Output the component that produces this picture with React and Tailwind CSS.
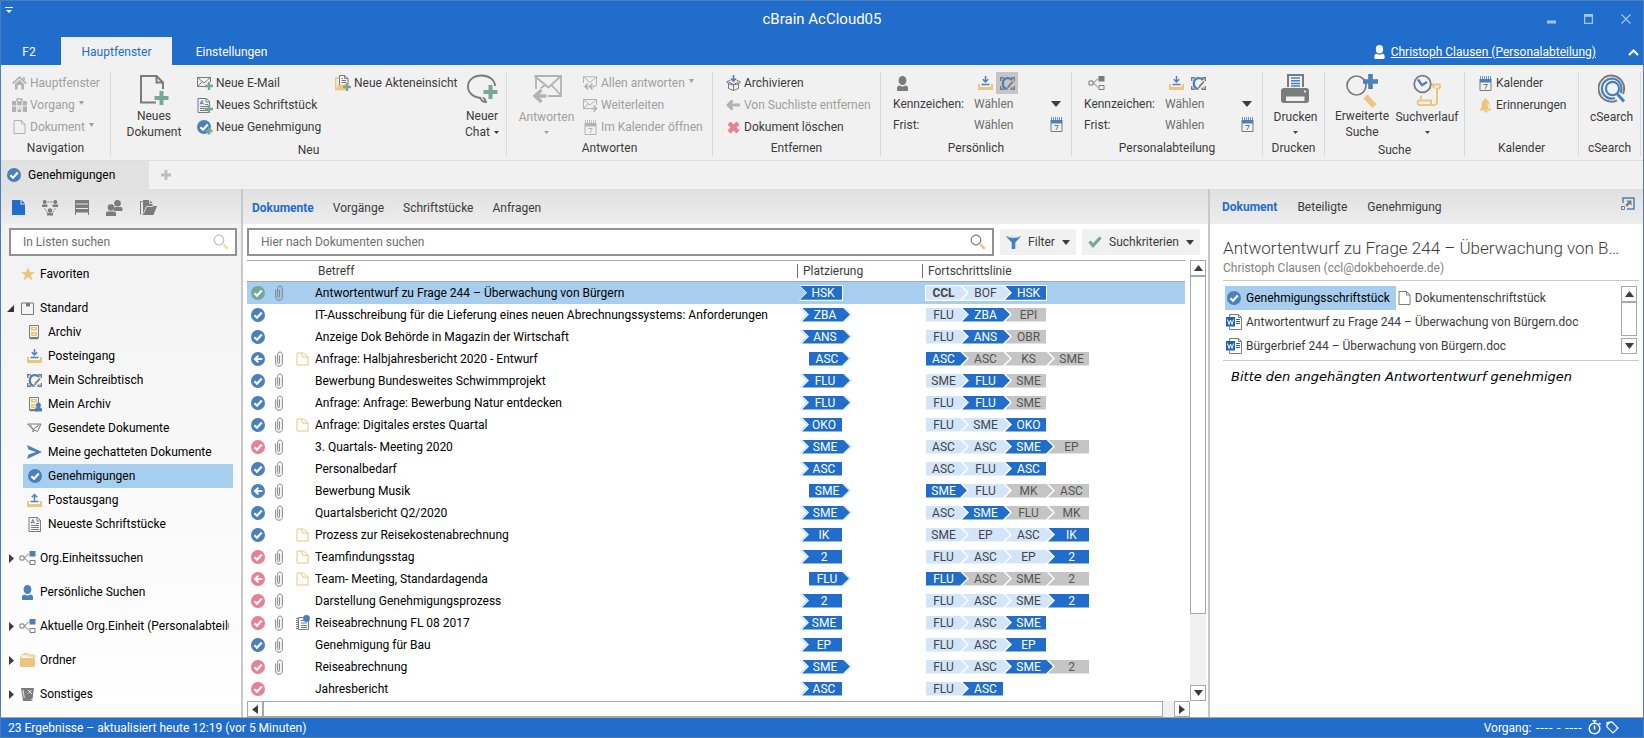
import React from "react";

/* ---------- icons ---------- */
const G = "#7b7b7b";
const B = "#4a80bb";
const Y = "#edc57c";
const GR = "#76a897";
const DIS = "#b2b2b2";

const Svg = ({ w = 16, h = 16, vb, className = "", children }) => (
  <svg width={w} height={h} viewBox={vb || `0 0 ${w} ${h}`} fill="none" aria-hidden="true" className={"shrink-0 " + className}>
    {children}
  </svg>
);

const Check = ({ color = B, size = 14 }) => (
  <Svg w={size} h={size} vb="0 0 14 14">
    <circle cx="7" cy="7" r="7" fill={color} />
    <path d="M3.4 7.2 6 9.7 10.8 4.6" stroke="#fff" strokeWidth="2.2" />
  </Svg>
);
const Back = ({ color = B }) => (
  <Svg w={14} h={14}>
    <circle cx="7" cy="7" r="7" fill={color} />
    <path d="M11.4 7H4M7.4 3.6 3.8 7l3.6 3.4" stroke="#fff" strokeWidth="1.9" />
  </Svg>
);
const Clip = () => (
  <Svg w={8} h={16}>
    <path d="M4.6 4.5v7.2c0 1.2-1.9 1.2-1.9 0V3.4c0-3.1 4.600-3.100 4.600 0v9.100c0 3.600-6.600 3.600-6.600 0V4.500" stroke="#808080" />
  </Svg>
);
const Note = () => (
  <Svg w={13} h={14}>
    <path d="M1 1h6.500L12 5v8H1zM5 1l2 4.300 5-.3" stroke={Y} />
  </Svg>
);
const Notebook = () => (
  <Svg w={14} h={15}>
    <path d="M2.500 2.500h10v12h-10z" stroke={G} />
    <path d="M0 3.500h3M0 5.500h3M0 7.500h3M0 9.500h3M0 11.500h3M0 13.500h3" stroke={G} />
    <path d="M5 5.500h6M5 8h6M5 10.500h6M5 12.500h6" stroke={B} strokeWidth="1" />
    <circle cx="10.500" cy="3.500" r="3.400" fill={B} />
  </Svg>
);
const Page = ({ color = G, w = 13, h = 14 }) => (
  <Svg w={w} h={h} vb="0 0 13 14">
    <path d="M1 .5h7.500L12 4v9.500H1zM8.500.5V4H12" stroke={color} />
  </Svg>
);
const Plus = ({ x, y, s = 7, t = 2, color = GR }) => (
  <path d={`M${x} ${y - s / 2}v${s}M${x - s / 2} ${y}h${s}`} stroke={color} strokeWidth={t} />
);
const MailNew = () => (
  <Svg w={16} h={14}>
    <path d="M9 10.500H.5v-9h13V6M.5 1.500 7 7l6.500-5.500M.5 10.500l5-5" stroke={G} />
    <Plus x={12} y={10} s={8} t={2.4} />
  </Svg>
);
const DocNew = ({ plus = true }) => (
  <Svg w={plus ? 16 : 14} h={15}>
    <path d="M1 .5h8.500l3 3v11H1zM9 .5V4h3.500" stroke={G} />
    <path d="M3 6.500 4.800 2.500 6.500 6.500M3.500 5.300h2.600" stroke={B} />
    <path d="M8 6.500h3M3 8.500h8M3 10.500h8M3 12.500h8" stroke={G} />
    {plus && <Plus x={12} y={11} s={8} t={2.4} />}
  </Svg>
);
const ApproveNew = () => (
  <Svg w={16} h={15}>
    <circle cx="7" cy="7" r="7" fill={B} />
    <path d="M3.400 7.200 6 9.700l4.800-5.100" stroke="#fff" strokeWidth="2.200" />
    <Plus x={12} y={11} s={7} t={2.400} />
  </Svg>
);
const FileAccess = () => (
  <Svg w={16} h={16}>
    <path d="M4 3H.7v11.500H11" stroke={Y} strokeWidth="1.300" />
    <path d="M1 14.500 4 8.500h10l-2 6z" fill={Y} />
    <path d="M4.500 10V.5h5l3.500 3V9z" fill="#f6f6f6" />
    <path d="M4.500 10V.5h5l3.500 3V9M9.500.5v3H13M6.500 3.500h1.500M6.500 5.500h4.500M6.500 7.500h4.500" stroke={G} />
    <Plus x={12} y={12} s={8} t={2.400} />
  </Svg>
);
const House = () => (
  <Svg w={15} h={14}>
    <path d="M.8 7.500 7.500 1.200l6.700 6.300" stroke={DIS} strokeWidth="1.800" />
    <path d="M11 1h1.800v3.500L11 3zM3 8l4.500-4.200L12 8v5.500H9.300V9H5.700v4.500H3z" fill={DIS} />
  </Svg>
);
const Briefcase = () => (
  <Svg w={15} h={14}>
    <path d="M5 3V1h5v2" stroke={DIS} strokeWidth="1.400" />
    <path d="M0 3h15v4.500H0zM0 8.500h4.500V14H0zM10.500 8.500H15V14h-4.500zM5.500 8.500h4V14h-4z" fill={DIS} />
    <path d="M4.800 3v11M10.200 3v11M6.500 8h2v3h-2z" stroke="#f1f1f1" />
  </Svg>
);
const BigPageNew = () => (
  <Svg w={30} h={32}>
    <path d="M24 15V8.500L17.500 2H2v26.500h15M17.500 2v6.500H24" stroke={G} strokeWidth="2" />
    <Plus x={22.5} y={24} s={14} t={4} />
  </Svg>
);
const BigChat = () => (
  <Svg w={31} h={30}>
    <path d="M16 23.500c2 1.500 3 2.500 3 4.500-3 0-5-2-5.500-4C6.500 23.500 1 19 1 12.500 1 6 7 1.500 14.500 1.500S28 6 28 12" stroke={G} strokeWidth="1.800" />
    <Plus x={23.5} y={18} s={14} t={4} />
  </Svg>
);
const BigReply = () => (
  <Svg w={30} h={30}>
    <path d="M4 15V2h25v20H16M2.500 2 16.500 13.500 29 2M29 21.500 19.500 11M4 18l9-7" stroke={DIS} strokeWidth="1.800" />
    <path d="M15 22H3M9.500 15 2.500 22l7 7" stroke="#f1f1f1" strokeWidth="6" />
    <path d="M14.500 22H3M9.500 16 3 22l6.500 6" stroke={DIS} strokeWidth="3.400" />
  </Svg>
);
const ReplyAll = () => (
  <Svg w={15} h={14}>
    <path d="M.5 7V.8h13v9H11M.5.8 7 6.500 13.500.8" stroke={DIS} />
    <path d="M5 7.500 2 10.500l3 3M2 10.500h3.500M9.500 7.500l-3 3 3 3M6.500 10.500h5" stroke={DIS} strokeWidth="1.500" />
  </Svg>
);
const Forward = () => (
  <Svg w={15} h={14}>
    <path d="M7 10.500H.5V1.500h13V7M.5 1.500 7 7l6.500-5.500M.5 10.500l5-5" stroke={DIS} />
    <path d="M7.500 10.500h5.500M10.500 7.500l3 3-3 3" stroke={DIS} strokeWidth="1.600" />
  </Svg>
);
const Cal = ({ c = B, g = G }) => (
  <Svg w={13} h={15}>
    <path d="M1 6h11v8.500H1z" stroke={g} />
    <path d="M.5 3h12v3H.5z" fill={c} />
    <path d="M1.500 0v3M3.500 0v3M5.500 0v3M7.500 0v3M9.500 0v3M11.500 0v3" stroke={c} strokeWidth=".8" />
    <path d="M4.300 8.500h4L6 13" stroke={g} />
  </Svg>
);
const Archive = () => (
  <Svg w={15} h={16}>
    <path d="M7.500 0v5.500M5 3.500l2.500 2.500L10 3.500" stroke={B} strokeWidth="1.600" />
    <path d="M2.500 8v5.500l5 2 5-2V8M7.500 9.500v6M4.500 5l-4 2 2.500 2 4.500 1 4.500-1 2.500-2-4-2M7.500 9.500 2.500 7M7.500 9.500l5-2.500" stroke={G} />
  </Svg>
);
const ArrowLeft = () => (
  <Svg w={15} h={12}>
    <path d="M14 6H3M6.500 1.500 2 6l4.500 4.500" stroke={DIS} strokeWidth="3" />
  </Svg>
);
const Cross = () => (
  <Svg w={13} h={13}>
    <path d="M2 2l9 9M11 2l-9 9" stroke="#e78294" strokeWidth="4.400" />
  </Svg>
);
const Person = ({ color = G, w = 11, h = 15 }) => (
  <Svg w={w} h={h} vb="0 0 11 15">
    <ellipse cx="5.500" cy="4.500" rx="3.900" ry="4.500" fill={color} />
    <path d="M0 14.500V12c0-2 2-2.500 2.500-2.500 2 1.200 4 1.200 6 0 .5 0 2.500.5 2.500 2.500v2c0 1-1 1-2 1H2c-1 0-2 0-2-.5z" fill={color} />
  </Svg>
);
const Org = ({ c = G }) => (
  <Svg w={17} h={14}>
    <path d="M1 5h4v4H1zM11 9.500h5v4h-5zM5.500 7l4.500-4.500M5.500 7l4.500 4.500" stroke={G} />
    <rect x="10.500" width="6" height="5.500" fill={c} />
  </Svg>
);
const Inbox = ({ out = false }) => (
  <Svg w={15} h={14}>
    <path d="M0 8h2v3h11V8h2v6H0z" fill={Y} />
    {out ? <path d="M7.500 7.500V1.500M4.800 4.300 7.500 1.500l2.700 2.800M3.500 8.500h8" stroke={B} strokeWidth="1.500" /> : <path d="M7.500 0v6M4.800 3.300 7.500 6l2.700-2.700M3.500 8.500h8" stroke={B} strokeWidth="1.500" />}
  </Svg>
);
const Desk = () => (
  <Svg w={15} h={13}>
    <path d="M.7 4V.7H4M11 .7h3.300V4M14.300 9v3.300H11M4 12.300H.7V9" stroke={G} strokeWidth="1.400" />
    <path d="M12 3.200C11 1.500 9.300 1.200 7.500 1.200 4.500 1.200 2.800 3.500 2.800 6.500s1.700 5.300 4.700 5.300" stroke={B} strokeWidth="2.300" />
    <path d="M8.300 9.700 13 4.500" stroke={G} strokeWidth="1.800" />
    <path d="M7.300 11.300l.5-2.300 1.700 1.500z" fill={G} />
    <path d="M10 12.200c1-.3 1.800-1 2.300-2" stroke={B} />
  </Svg>
);
const Printer = () => (
  <Svg w={29} h={30}>
    <path d="M7 13V1h15v12" stroke={G} strokeWidth="2" />
    <path d="M10 4h9M10 6.700h9M10 9.400h9M10 12h9" stroke={B} strokeWidth="1.500" />
    <rect y="14" width="28" height="15" rx="3" fill={G} />
    <path d="M5 22.500h18.500V27H5z" fill="#f1f1f1" />
    <circle cx="24" cy="17.500" r="1" fill="#fff" />
  </Svg>
);
const AdvSearch = () => (
  <Svg w={33} h={34}>
    <circle cx="10.500" cy="11.500" r="9.500" stroke={G} strokeWidth="1.700" />
    <path d="M19.500 22.500l9 9.500" stroke={Y} strokeWidth="5.500" />
    <path d="M24.500 0v15M17 7.500h15" stroke={B} strokeWidth="4.600" />
  </Svg>
);
const History = () => (
  <Svg w={29} h={32}>
    <circle cx="9.500" cy="10" r="8.300" stroke={G} strokeWidth="1.800" />
    <path d="M5 5.500 9 11.200 14 8" stroke={B} strokeWidth="2.400" />
    <path d="M8 25v-3.500M19 10.500h7c1.500 0 1.500 4-.5 4H24V28c0 3-3 3-4 3H6.500c-2.500 0-2.500-4.500 0-4.500H18V31M19 10.500c1.500 1 2 2.500 2 4" stroke={Y} strokeWidth="2" />
  </Svg>
);
const Bell = () => (
  <Svg w={13} h={15}>
    <path d="M6.500 0c1 0 1 1 1 1.500C10 2.500 10.500 5 10.500 8c0 2.500 1 3 2.500 4.500H0C1.500 11 2.500 10.500 2.500 8c0-3 .5-5.500 3-6.500 0-.5 0-1.500 1-1.500zM5 13h3.500c0 2-3.500 2-3.500 0z" fill={Y} />
    <path d="M9 5.500c.3 2 .2 4 1.200 5.500" stroke="#fff" strokeWidth=".8" />
  </Svg>
);
const CSearch = () => (
  <Svg w={28} h={30}>
    <path d="M19 26.300A12.800 13 0 1 1 25 20" stroke={G} strokeWidth="2" />
    <path d="M22.500 19A9.800 10 0 1 0 17 24" stroke={B} strokeWidth="2.200" />
    <circle cx="14.500" cy="14.500" r="6.600" stroke={B} strokeWidth="2.200" />
    <path d="M18.500 19l7.500 8.500" stroke={B} strokeWidth="3" />
  </Svg>
);
const Magnifier = ({ pale = false }) => (
  <Svg w={16} h={16}>
    <circle cx="6" cy="6" r="4.800" stroke={pale ? "#bdbdbd" : G} strokeWidth="1.200" />
    <path d="M10.300 10.300l4.500 4.500" stroke={pale ? "#f3dcb4" : Y} strokeWidth="2.600" />
  </Svg>
);
const Funnel = () => (
  <Svg w={15} h={14}>
    <path d="M0 1.500h15L9.300 7.500V14H5.700V7.500z" fill={B} />
    <ellipse cx="7.500" cy="1.800" rx="5.800" ry="1.100" fill="#d9e6f3" />
  </Svg>
);
const Tick = () => (
  <Svg w={14} h={12}>
    <path d="M1.500 5.500 5 9.500 12.500 1.500" stroke={GR} strokeWidth="3.200" />
  </Svg>
);
const Star = () => (
  <Svg w={14} h={14}>
    <path d="M7 .2 8.900 5H14L9.900 8.200l1.600 5.300L7 10.300l-4.500 3.200 1.600-5.300L0 5h5.100z" fill={Y} />
  </Svg>
);
const Box = () => (
  <Svg w={13} h={13}>
    <path d="M.5 1h12v11.500H.5z" stroke={G} />
    <path d="M5 1h4v3.500H5z" fill={G} />
  </Svg>
);
const Cabinet = ({ person = false }) => (
  <Svg w={15} h={15}>
    <path d="M2.500.5h9v12h-9z" stroke={G} />
    <path d="M2.500 13.500h9" stroke={G} strokeWidth="1.500" />
    <path d="M4 2h6v3.500H4zM4 7h6v4H4z" fill={Y} />
    <path d="M6 3.500h2M6 9h2" stroke="#fff" />
    {person && <path d="M11.500 5.500a2.400 2.600 0 0 1 1.300 4.800c1.200.3 2.200.8 2.200 2.200v2H8v-2c0-1.400 1-1.900 2.200-2.200a2.400 2.600 0 0 1 1.300-4.800z" fill={B} />}
  </Svg>
);
const Sent = () => (
  <Svg w={15} h={10}>
    <path d="M.5 1h13.500L10.500 8.500 6 6.500zM3 1.500 6 6.500V9l1.500-2M6 6.500 12.500 1.500" stroke={G} />
  </Svg>
);
const Chatted = () => (
  <Svg w={15} h={14}>
    <path d="M0 0 15 7 0 14 1.500 9.500 9 7 1.500 4.500z" fill={B} />
  </Svg>
);
const Folder = () => (
  <Svg w={16} h={14}>
    <path d="M1 12V2.500l1-1h4l1 1.500h6.500V5" stroke={Y} />
    <path d="M4 3.500V1l1-.5h3l1 1.500h6v3" stroke={Y} />
    <path d="M0 5h13.500l1.500 1v7l-1 1H1l-1-1z" fill={Y} />
  </Svg>
);
const Misc = () => (
  <Svg w={13} h={13}>
    <path d="M0 0h13l-1.500 11H9.500L12 13H2z" fill={G} />
    <path d="M7 2l4 4M10.500 2 7 5.500M2 2l1.300 8" stroke="#eee" />
  </Svg>
);
const SolidPage = () => (
  <Svg w={13} h={15}>
    <path d="M0 0h8.500v4.500H13V15H0z" fill="#216dcc" />
    <path d="M9.500 0 13 3.500H9.500z" fill="#216dcc" />
  </Svg>
);
const Network = () => (
  <Svg w={16} h={16}>
    <g fill={G}>
      <circle cx="2.700" cy="2" r="2" /><path d="M0 4.500h5.400v2.500H0z" />
      <circle cx="13.300" cy="2" r="2" /><path d="M10.600 4.500H16v2.500h-5.400z" />
      <circle cx="8" cy="10.500" r="2.200" /><path d="M5 13h6v2.500H5z" />
    </g>
    <path d="M5.500 2h5M2.700 8.500l2.500 4M13.300 8.500l-2.500 4" stroke={G} strokeDasharray="2 1" />
  </Svg>
);
const Shelf = () => (
  <Svg w={14} h={15}>
    <path d="M.5 0v15M13.500 0v15" stroke={G} />
    <path d="M0 0h14v3.500H0zM0 4.500h14V8H0zM0 9h14v3.500H0z" fill={G} />
  </Svg>
);
const People = () => (
  <Svg w={17} h={16}>
    <g fill={G}>
      <circle cx="11.500" cy="3.300" r="3.300" /><path d="M8 11V8.500c0-1 1-1.500 2-1.500h4.500c1 0 2 .5 2 1.500V11z" />
      <circle cx="5" cy="7.500" r="3.300" /><path d="M0 16v-2.500c0-1.500 1-2 2-2h6c1 0 2 .5 2 2V16z" />
    </g>
  </Svg>
);
const OpenFolder = () => (
  <Svg w={17} h={15}>
    <path d="M.5 14.500V1.500h2" stroke={G} />
    <path d="M3 14V0h6.500l3 3v3H17l-3.500 9H2z" fill={G} />
    <path d="M9.500 0v3.500H13M3.500 13.500 6.500 6.500H13" stroke="#e4e4e4" strokeWidth=".9" />
  </Svg>
);
const Word = () => (
  <Svg w={16} h={16}>
    <path d="M3.500 3V.5h9l3 3v12h-12V13M12.500.5v3h3" stroke={G} />
    <rect y="3" width="9" height="9.500" fill="#1f5fc0" />
    <path d="M1.500 5.500 3 10.500 4.500 6 6 10.500 7.500 5.500" stroke="#fff" />
    <path d="M10 5.500h4M10 7.500h4M10 9.500h4" stroke="#1f5fc0" />
  </Svg>
);
const PopOut = () => (
  <Svg w={14} h={13}>
    <path d="M2 6V1h11v11H6" stroke={B} strokeWidth="1.500" />
    <path d="M.5 9.500h3v3h-3z" stroke={G} />
    <path d="M5.500 3.500H10.500v5L8.700 7 6 9.700 4.300 8 7 5.300z" fill={G} />
  </Svg>
);
const Stopwatch = () => (
  <Svg w={14} h={15}>
    <circle cx="6.500" cy="8.500" r="5.300" stroke="#fff" strokeWidth="1.500" />
    <path d="M4.500.8h4M6.500 1v2M6.500 5.500v4M11 3l1.500 1.500" stroke="#fff" strokeWidth="1.500" />
  </Svg>
);
const Tag = () => (
  <Svg w={13} h={13}>
    <path d="M1 1.500 6 1l6 6-5 5-6-6z" stroke="#fff" strokeWidth="1.200" />
    <path d="M1 1h4L1 5z" fill="#fff" />
  </Svg>
);
const Tri = ({ dir = "down", w = 9, h = 6, color = "#3c3c3c" }) => {
  const d = { down: "M0 0h10L5 10z", up: "M0 10h10L5 0z", left: "M10 0v10L0 5z", right: "M0 0v10l10-5z" }[dir];
  return (
    <svg width={w} height={h} viewBox="0 0 10 10" preserveAspectRatio="none" aria-hidden="true" className="shrink-0">
      <path d={d} fill={color} />
    </svg>
  );
};

/* ---------- ribbon ---------- */
const Group = ({ label, className, children }) => (
  <section className={"flex shrink-0 flex-col border-r border-[#dadada] " + className} aria-label={label}>
    <div className="flex h-[68px] w-full">{children}</div>
    <div className="pt-0.5 text-center leading-4">{label}</div>
  </section>
);
const Small = ({ icon, children, arrow, disabled }) => (
  <button type="button" disabled={disabled} className={"flex h-[22px] items-center whitespace-nowrap " + (disabled ? "text-[#a0a0a0]" : "")}>
    <span className="mr-[3px] flex w-4 justify-center">{icon}</span>
    {children}
    {arrow && <span className="mb-1 ml-1"><Tri w={5} h={4} color={disabled ? "#a0a0a0" : "#444"} /></span>}
  </button>
);
const Big = ({ icon, lines, arrow, disabled, className = "" }) => (
  <button type="button" disabled={disabled} className={"flex flex-col items-center leading-4 whitespace-nowrap " + className + (disabled ? " text-[#a0a0a0]" : "")}>
    <span className="flex h-[35px] items-start">{icon}</span>
    {lines.map((l, i) => (
      <span key={l} className="flex items-center gap-1">
        {l}
        {arrow === "inline" && i === lines.length - 1 && <Tri w={5} h={3} />}
      </span>
    ))}
    {arrow === "below" && <span className="mt-1.5"><Tri w={5} h={3} color={disabled ? "#a0a0a0" : "#444"} /></span>}
  </button>
);
const Flags = ({ icon, active }) => (
  <div className="grid w-full grid-cols-[81px_1fr_22px] grid-rows-[22px_20px_21px] items-center pr-1 pl-3">
    <span className="pl-1">{icon}</span>
    <span className="flex items-center">
      <button type="button" aria-label="Posteingang" className="grid h-[22px] w-[22px] place-items-center"><Inbox /></button>
      <button type="button" aria-label="Schreibtisch" className={"grid h-[22px] w-[22px] place-items-center " + (active ? "bg-[#c5c5c5]" : "")}><Desk /></button>
    </span>
    <span />
    <span>Kennzeichen:</span>
    <button type="button" className="text-left text-[#6e6e6e]">Wählen</button>
    <button type="button" aria-label="Kennzeichen öffnen" className="flex justify-center"><Tri w={10} h={6} /></button>
    <span>Frist:</span>
    <button type="button" className="text-left text-[#6e6e6e]">Wählen</button>
    <button type="button" aria-label="Kalender öffnen" className="flex justify-center"><Cal /></button>
  </div>
);

/* ---------- approval chevrons ---------- */
const TONE = {
  d: "bg-[#d3e5fb] text-[#444]",
  a: "bg-[#216dcc] text-white",
  w: "bg-[#c5c5c5] text-[#555]",
};
const FIRST = "[clip-path:polygon(0_0,calc(100%_-_7px)_0,100%_50%,calc(100%_-_7px)_100%,0_100%)]";
const MID = "[clip-path:polygon(0_0,calc(100%_-_7px)_0,100%_50%,calc(100%_-_7px)_100%,0_100%,7px_50%)]";
const LAST = "[clip-path:polygon(0_0,100%_0,100%_100%,0_100%,7px_50%)]";
const STRIP = "[clip-path:polygon(0_0,2px_0,9px_50%,2px_100%,0_100%,7px_50%)]";

const Progress = ({ steps, selected }) => (
  <span className={"inline-flex h-[14px] align-middle leading-[14px] " + (selected ? "bg-white outline outline-white" : "")}>
    {steps.map(([name, tone], i) => {
      const first = i === 0;
      const last = i === steps.length - 1;
      const shape = first ? "w-[41px] pr-1.5 " + FIRST : last ? "-ml-[5px] w-[41px] pl-1.5 " + LAST : "-ml-[5px] w-[48px] pr-px " + MID;
      return (
        <span key={i} className={"flex justify-center " + shape + " " + TONE[tone] + (name === "CCL" ? " font-bold" : "")}>
          {name}
        </span>
      );
    })}
  </span>
);
const Place = ({ name, kind, selected }) => {
  if (selected)
    return (
      <span className={"inline-flex h-4 w-[44px] items-center justify-end bg-white pr-px align-middle " + LAST}>
        <span className={"flex h-[14px] w-[42px] justify-center bg-[#216dcc] pl-1 leading-[14px] text-white " + LAST}>{name}</span>
      </span>
    );
  const shape = kind === "first" ? "ml-2.5 w-10 pr-1 " + FIRST : kind === "mid" ? "-ml-1.5 w-[48px] pr-0.5 " + MID : "-ml-1.5 w-10 pl-1 " + LAST;
  return (
    <span className="inline-flex h-[14px] align-middle leading-[14px]">
      {kind !== "first" && <span className={"w-[9px] bg-[#d3e5fb] " + STRIP} />}
      <span className={"flex justify-center bg-[#216dcc] text-white " + shape}>{name}</span>
      {kind !== "last" && <span className={"-ml-[7px] w-[9px] bg-[#d3e5fb] " + STRIP} />}
    </span>
  );
};

const BLUE = B, PINK = "#e78294", GREEN = "#76a897";
// [status colour, returned, attachment, marker, subject, steps]
const rows = [
  [GREEN, 0, 1, "", "Antwortentwurf zu Frage 244 – Überwachung von Bürgern", "CCL.d BOF.d HSK.a"],
  [BLUE, 0, 0, "", "IT-Ausschreibung für die Lieferung eines neuen Abrechnungssystems: Anforderungen", "FLU.d ZBA.a EPI.w"],
  [BLUE, 0, 0, "", "Anzeige Dok Behörde in Magazin der Wirtschaft", "FLU.d ANS.a OBR.w"],
  [BLUE, 1, 1, "note", "Anfrage: Halbjahresbericht 2020 - Entwurf", "ASC.a ASC.w KS.w SME.w"],
  [BLUE, 0, 1, "", "Bewerbung Bundesweites Schwimmprojekt", "SME.d FLU.a SME.w"],
  [BLUE, 0, 1, "", "Anfrage: Anfrage: Bewerbung Natur entdecken", "FLU.d FLU.a SME.w"],
  [BLUE, 0, 1, "note", "Anfrage: Digitales erstes Quartal", "FLU.d SME.d OKO.a"],
  [PINK, 0, 1, "", "3. Quartals- Meeting 2020", "ASC.d ASC.d SME.a EP.w"],
  [BLUE, 0, 1, "", "Personalbedarf", "ASC.d FLU.d ASC.a"],
  [BLUE, 1, 1, "", "Bewerbung Musik", "SME.a FLU.d MK.w ASC.w"],
  [BLUE, 0, 1, "", "Quartalsbericht Q2/2020", "ASC.d SME.a FLU.w MK.w"],
  [BLUE, 0, 0, "note", "Prozess zur Reisekostenabrechnung", "SME.d EP.d ASC.d IK.a"],
  [PINK, 0, 1, "note", "Teamfindungsstag", "FLU.d ASC.d EP.d 2.a"],
  [PINK, 1, 1, "note", "Team- Meeting, Standardagenda", "FLU.a ASC.w SME.w 2.w"],
  [PINK, 0, 1, "", "Darstellung Genehmigungsprozess", "FLU.d ASC.d SME.d 2.a"],
  [PINK, 0, 1, "book", "Reiseabrechnung FL 08 2017", "FLU.d ASC.d SME.a"],
  [BLUE, 0, 1, "", "Genehmigung für Bau", "FLU.d ASC.d EP.a"],
  [PINK, 0, 1, "", "Reiseabrechnung", "FLU.d ASC.d SME.a 2.w"],
  [PINK, 0, 0, "", "Jahresbericht", "FLU.d ASC.a"],
].map(([color, back, clip, mark, subject, s]) => {
  const steps = s.split(" ").map((x) => x.split("."));
  const at = steps.findIndex((x) => x[1] === "a");
  return { color, back, clip, mark, subject, steps, name: steps[at][0], kind: at === 0 ? "first" : at === steps.length - 1 ? "last" : "mid" };
});

const tree = [
  { icon: <Star />, label: "Favoriten" },
  {
    icon: <Box />, label: "Standard", open: true,
    items: [
      [<Cabinet />, "Archiv"],
      [<Inbox />, "Posteingang"],
      [<Desk />, "Mein Schreibtisch"],
      [<Cabinet person />, "Mein Archiv"],
      [<Sent />, "Gesendete Dokumente"],
      [<Chatted />, "Meine gechatteten Dokumente"],
      [<Check />, "Genehmigungen"],
      [<Inbox out />, "Postausgang"],
      [<DocNew plus={false} />, "Neueste Schriftstücke"],
    ],
  },
  { icon: <Org c={B} />, label: "Org.Einheitssuchen", closed: true },
  { icon: <Person color={B} />, label: "Persönliche Suchen" },
  { icon: <Org c={B} />, label: "Aktuelle Org.Einheit (Personalabteilung)", closed: true },
  { icon: <Folder />, label: "Ordner", closed: true },
  { icon: <Misc />, label: "Sonstiges", closed: true },
];

const barHead = "h-[35px] shrink-0 bg-linear-to-b from-[#e0e0e0] to-[#ededed]";
const scrollBtn = "grid size-4 shrink-0 place-items-center border border-[#a8a8a8] bg-white";

export default function App() {
  return (
    <div className="flex h-screen flex-col overflow-hidden border border-[#4a7ebb] bg-white font-[Roboto,'Open_Sans',sans-serif] text-xs text-[#3c3c3c]">
      {/* window title */}
      <header className="shrink-0 bg-[#216dcc] text-white">
        <div className="grid h-9 grid-cols-3 items-center">
          <button type="button" aria-label="Schnellzugriff" className="ml-1 flex w-2 flex-col items-center gap-0.5 self-start pt-1.5">
            <span className="h-px w-full bg-white" />
            <Tri w={6} h={3} color="#fff" />
          </button>
          <h1 className="pt-0.5 text-center text-[15px] font-normal">cBrain AcCloud05</h1>
          <div className="flex justify-end gap-7 pr-3 text-[#a5c5ee]">
            <button type="button" aria-label="Minimieren"><Svg w={9} h={10}><path d="M0 8h9" stroke="currentColor" strokeWidth="3" /></Svg></button>
            <button type="button" aria-label="Maximieren"><Svg w={9} h={10}><path d="M.5.5h8v9h-8zM0 2h9" stroke="currentColor" strokeWidth="1.500" /></Svg></button>
            <button type="button" aria-label="Schließen"><Svg w={10} h={10}><path d="M.5.5l9 9M9.500.5l-9 9" stroke="currentColor" strokeWidth="1.200" /></Svg></button>
          </div>
        </div>
        <div className="flex h-7 items-stretch">
          <nav className="flex flex-1">
            <button type="button" className="w-[60px] pt-0.5 pr-1">F2</button>
            <button type="button" className="w-[111px] bg-[#f1f1f1] pt-0.5 text-[#216dcc]">Hauptfenster</button>
            <button type="button" className="w-[119px] pt-0.5">Einstellungen</button>
          </nav>
          <div className="flex items-center pt-0.5">
            <Person color="#fff" w={11} h={14} />
            <a href="#user" className="ml-1.5 underline">Christoph Clausen (Personalabteilung)</a>
            <button type="button" aria-label="Menüband einklappen" className="mr-1 ml-8">
              <Svg w={11} h={8}><path d="M1 7l4.500-4.500L10 7" stroke="#fff" strokeWidth="2.200" /></Svg>
            </button>
          </div>
        </div>
      </header>

      {/* ribbon */}
      <div className="flex h-[96px] shrink-0 border-b border-[#dedede] bg-[#f1f1f1] pt-[7px] pb-1">
        <Group label="Navigation" className="w-[110px]">
          <div className="pl-2.5">
            <Small disabled icon={<House />}>Hauptfenster</Small>
            <Small disabled arrow icon={<Briefcase />}>Vorgang</Small>
            <Small disabled arrow icon={<Page color={DIS} />}>Dokument</Small>
          </div>
        </Group>
        <Group label="Neu" className="w-[396px]">
          <Big className="w-[86px] pt-0.5" icon={<BigPageNew />} lines={["Neues", "Dokument"]} />
          <div className="w-[138px]">
            <Small icon={<MailNew />}>Neue E-Mail</Small>
            <Small icon={<DocNew />}>Neues Schriftstück</Small>
            <Small icon={<ApproveNew />}>Neue Genehmigung</Small>
          </div>
          <div className="flex-1">
            <Small icon={<FileAccess />}>Neue Akteneinsicht</Small>
          </div>
          <Big className="w-12 pt-0.5" icon={<BigChat />} lines={["Neuer", "Chat"]} arrow="inline" />
        </Group>
        <Group label="Antworten" className="w-[206px]">
          <Big disabled className="w-[75px] pt-0.5 pl-1" icon={<BigReply />} lines={["Antworten"]} arrow="below" />
          <div>
            <Small disabled arrow icon={<ReplyAll />}>Allen antworten</Small>
            <Small disabled icon={<Forward />}>Weiterleiten</Small>
            <Small disabled icon={<Cal c={DIS} g={DIS} />}>Im Kalender öffnen</Small>
          </div>
        </Group>
        <Group label="Entfernen" className="w-[168px]">
          <div className="pl-3">
            <Small icon={<Archive />}>Archivieren</Small>
            <Small disabled icon={<ArrowLeft />}>Von Suchliste entfernen</Small>
            <Small icon={<Cross />}>Dokument löschen</Small>
          </div>
        </Group>
        <Group label="Persönlich" className="w-[191px]">
          <Flags active icon={<Person />} />
        </Group>
        <Group label="Personalabteilung" className="w-[191px]">
          <Flags icon={<Org />} />
        </Group>
        <Group label="Drucken" className="w-[62px]">
          <Big className="w-full pt-0.5 pl-1" icon={<Printer />} lines={["Drucken"]} arrow="below" />
        </Group>
        <Group label="Suche" className="w-[140px]">
          <Big className="w-[74px] pt-0.5" icon={<AdvSearch />} lines={["Erweiterte", "Suche"]} />
          <Big className="w-14 pt-0.5" icon={<History />} lines={["Suchverlauf"]} arrow="below" />
        </Group>
        <Group label="Kalender" className="w-[114px]">
          <div className="pl-3">
            <Small icon={<Cal />}>Kalender</Small>
            <Small icon={<Bell />}>Erinnerungen</Small>
          </div>
        </Group>
        <Group label="cSearch" className="w-[62px]">
          <Big className="w-full pt-0.5 pl-1" icon={<CSearch />} lines={["cSearch"]} />
        </Group>
      </div>

      {/* open tabs */}
      <div className="flex h-7 shrink-0 bg-[#f1f1f1]">
        <button type="button" className="flex w-[148px] items-center gap-[7px] bg-[#e1e1e1] pl-1.5 text-black"><Check />Genehmigungen</button>
        <button type="button" aria-label="Neuer Tab" className="w-9 pl-3">
          <Svg w={10} h={10}><path d="M5 0v10M0 5h10" stroke="#bdbdbd" strokeWidth="2.800" /></Svg>
        </button>
      </div>

      <main className="flex min-h-0 flex-1 border-b border-[#a5a5a5]">
        {/* lists */}
        <aside className="flex w-[242px] shrink-0 flex-col border-r-2 border-[#c8c8c8] bg-linear-to-b from-[#f1f1f1] to-white">
          <div className={"flex items-center gap-[17px] pt-0.5 pl-[11px] " + barHead}>
            <button type="button" aria-label="Dokumente"><SolidPage /></button>
            <button type="button" aria-label="Einheiten"><Network /></button>
            <button type="button" aria-label="Register"><Shelf /></button>
            <button type="button" aria-label="Personen"><People /></button>
            <button type="button" aria-label="Ordner"><OpenFolder /></button>
          </div>
          <div className="mt-1 mr-1 ml-2 flex h-7 items-center border-2 border-[#929292] bg-white pr-1.5 pl-3">
            <input type="text" aria-label="In Listen suchen" placeholder="In Listen suchen" className="min-w-0 flex-1 outline-none placeholder:text-[#6e6e6e]" />
            <Magnifier pale />
          </div>
          <ul className="flex flex-col gap-2.5 pt-1.5 text-black">
            {tree.map((g) => (
              <li key={g.label}>
                <button type="button" className="flex h-6 w-full items-center pr-3 pl-1.5">
                  <span className="flex w-3 shrink-0 items-center">
                    {g.closed && <span className="ml-0.5"><Tri dir="right" w={5} h={9} /></span>}
                    {g.open && <Svg w={7} h={7}><path d="M7 0v7H0z" fill="#333" /></Svg>}
                  </span>
                  <span className="mr-1 flex w-[17px] shrink-0 justify-center">{g.icon}</span>
                  <span className="overflow-hidden whitespace-nowrap">{g.label}</span>
                </button>
                {g.items && (
                  <ul>
                    {g.items.map(([icon, label]) => (
                      <li key={label} className="pr-2 pl-[22px]">
                        <button type="button" className={"flex h-6 w-full items-center gap-1.5 pl-1 whitespace-nowrap " + (label === "Genehmigungen" ? "bg-[#a7cdef]" : "")}>
                          <span className="flex w-[15px] justify-center">{icon}</span>
                          {label}
                        </button>
                      </li>
                    ))}
                  </ul>
                )}
              </li>
            ))}
          </ul>
        </aside>

        {/* documents */}
        <section className="flex min-w-0 flex-1 flex-col">
          <nav className={"flex items-center gap-[19px] pt-0.5 pl-[9px] " + barHead}>
            <button type="button" className="font-bold text-[#216dcc]">Dokumente</button>
            <button type="button">Vorgänge</button>
            <button type="button">Schriftstücke</button>
            <button type="button">Anfragen</button>
          </nav>
          <div className="mt-1 mr-2 ml-1 flex h-7 items-center gap-1.5">
            <div className="flex h-7 flex-1 items-center border-2 border-[#929292] pr-1.5 pl-3">
              <input type="text" aria-label="Hier nach Dokumenten suchen" placeholder="Hier nach Dokumenten suchen" className="min-w-0 flex-1 outline-none placeholder:text-[#6e6e6e]" />
              <Magnifier />
            </div>
            <button type="button" className="flex h-[26px] w-[76px] items-center justify-between bg-[#f1f1f1] px-1.5"><Funnel />Filter<Tri w={8} h={5} /></button>
            <button type="button" className="flex h-[26px] w-[118px] items-center justify-between bg-[#f1f1f1] px-1.5"><Tick />Suchkriterien<Tri w={8} h={5} /></button>
          </div>
          <div className="mt-1 ml-1 flex min-h-0 flex-1">
            <div className="min-w-0 flex-1 overflow-hidden pr-[5px]">
              <table className="w-full table-fixed border-collapse">
                <colgroup>
                  <col className="w-[21px]" /><col className="w-[22px]" /><col className="w-[25px]" /><col />
                  <col className="w-[125px]" /><col className="w-[263px]" />
                </colgroup>
                <thead>
                  <tr className="h-[21px] border-y border-[#a8a8a8] text-left">
                    <th aria-label="Status" /><th aria-label="Anlage" /><th aria-label="Typ" />
                    <th className="pl-[3px] font-normal">Betreff</th>
                    <th className="font-normal"><span className="block border-l border-[#6e6e6e] pl-[5px] leading-[14px]">Platzierung</span></th>
                    <th className="font-normal"><span className="block border-l border-[#6e6e6e] pl-[5px] leading-[14px]">Fortschrittslinie</span></th>
                  </tr>
                </thead>
                <tbody className="text-black">
                  {rows.map((r, i) => (
                    <tr key={i} className={"h-[22px] " + (i === 0 ? "bg-[#a7cdef]" : "")}>
                      <td className="p-0"><span className="flex justify-center">{r.back ? <Back color={r.color} /> : <Check color={r.color} />}</span></td>
                      <td className="p-0"><span className="flex justify-center">{r.clip ? <Clip /> : null}</span></td>
                      <td className="p-0"><span className="flex justify-center">{r.mark === "note" ? <Note /> : r.mark === "book" ? <Notebook /> : null}</span></td>
                      <td className="truncate p-0">{r.subject}</td>
                      <td className="p-0 pl-0.5 leading-none">
                        <Place name={r.name} kind={r.kind} selected={i === 0} />
                      </td>
                      <td className="p-0 pl-1 leading-none"><Progress steps={r.steps} selected={i === 0} /></td>
                    </tr>
                  ))}
                </tbody>
              </table>
            </div>
            <div className="mr-0.5 flex w-4 shrink-0 flex-col bg-[#f1f1f1]">
              <button type="button" aria-label="Nach oben" className={scrollBtn}><Tri dir="up" w={9} h={6} /></button>
              <div className="flex-[338] border border-[#a8a8a8] bg-white" />
              <div className="flex-[71]" />
              <button type="button" aria-label="Nach unten" className={scrollBtn}><Tri w={9} h={6} /></button>
            </div>
          </div>
          <div className="mr-[18px] ml-1 flex h-4 shrink-0 bg-[#f1f1f1]">
            <button type="button" aria-label="Nach links" className={scrollBtn}><Tri dir="left" w={6} h={9} /></button>
            <div className="flex-[900] border border-[#a8a8a8] bg-white" />
            <div className="flex-[11]" />
            <button type="button" aria-label="Nach rechts" className={scrollBtn}><Tri dir="right" w={6} h={9} /></button>
          </div>
        </section>

        {/* preview */}
        <section className="flex w-[435px] shrink-0 flex-col border-l-2 border-[#c8c8c8]">
          <div className={"flex items-center gap-5 pr-2 pl-3 " + barHead}>
            <button type="button" className="font-bold text-[#216dcc]">Dokument</button>
            <button type="button">Beteiligte</button>
            <button type="button">Genehmigung</button>
            <button type="button" aria-label="In neuem Fenster öffnen" className="ml-auto pb-1.5"><PopOut /></button>
          </div>
          <div className="mr-1 ml-[13px]">
            <h2 className="truncate pt-3 pr-4 text-[17px] leading-6 font-light">Antwortentwurf zu Frage 244 – Überwachung von Bürgern</h2>
            <p className="border-b border-[#c8c8c8] pb-1 leading-4 text-[#808080]">Christoph Clausen (ccl@dokbehoerde.de)</p>
            <div className="flex border-b border-[#c8c8c8] pt-[5px] pb-0.5">
              <div className="min-w-0 flex-1">
                <div className="flex h-6 items-center">
                  <button type="button" className="ml-0.5 flex h-6 items-center gap-[5px] bg-[#a7cdef] pr-1.5 pl-0.5 text-black"><Check />Genehmigungsschriftstück</button>
                  <button type="button" className="flex items-center gap-1 pl-0.5 whitespace-nowrap"><Page />Dokumentenschriftstück</button>
                </div>
                <button type="button" className="flex h-6 items-center gap-1 pl-[3px] whitespace-nowrap"><Word />Antwortentwurf zu Frage 244 – Überwachung von Bürgern.doc</button>
                <button type="button" className="flex h-6 items-center gap-1 pl-[3px] whitespace-nowrap"><Word />Bürgerbrief 244 – Überwachung von Bürgern.doc</button>
              </div>
              <div className="mr-0.5 mb-1 flex w-4 flex-col">
                <button type="button" aria-label="Nach oben" className={scrollBtn}><Tri dir="up" w={9} h={6} /></button>
                <div className="mb-0.5 flex-1 border border-[#a8a8a8]" />
                <button type="button" aria-label="Nach unten" className={scrollBtn}><Tri w={9} h={6} /></button>
              </div>
            </div>
            <p className="pt-2 pl-2 font-['DejaVu_Sans',sans-serif] text-[13px] leading-4 text-black italic">Bitte den angehängten Antwortentwurf genehmigen</p>
          </div>
        </section>
      </main>

      <footer className="flex h-[19px] shrink-0 items-center justify-between bg-[#216dcc] pr-6 pl-[7px] text-white">
        <span>23 Ergebnisse – aktualisiert heute 12:19 (vor 5 Minuten)</span>
        <span className="flex items-center gap-1">Vorgang: <span className="font-['DejaVu_Sans',sans-serif]">---- - ----</span><span className="ml-0.5 flex items-center gap-1"><Stopwatch /><Tag /></span></span>
      </footer>
    </div>
  );
}
